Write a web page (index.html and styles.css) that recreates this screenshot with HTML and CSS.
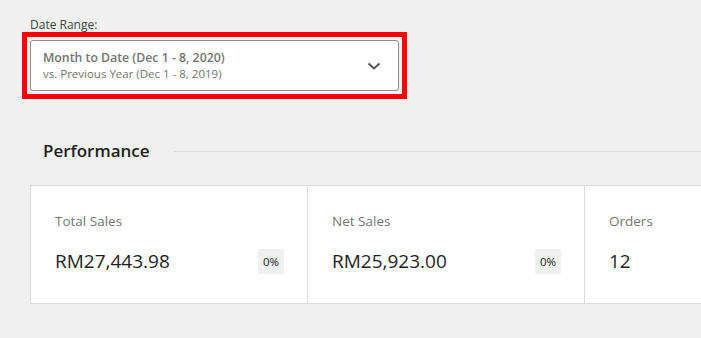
FILE: index.html
```html
<!DOCTYPE html>
<html lang="en">
<head>
    <meta charset="UTF-8">
    <meta name="viewport" content="width=device-width, initial-scale=1.0">
    <title>Analytics - Overview</title>
    <link rel="stylesheet" href="styles.css">
</head>
<body>
    <div class="page">
        <div class="date-range">
            <label class="field-label">Date Range:</label>
            <div class="highlight">
                <button class="range-select">
                    <span class="range-text">
                        <span class="range-main">Month to Date (Dec 1 - 8, 2020)</span>
                        <span class="range-compare">vs. Previous Year (Dec 1 - 8, 2019)</span>
                    </span>
                    <svg class="chevron" width="16" height="16" viewBox="0 0 16 16">
                        <path d="M2.5 5.5 L8 10.5 L13.5 5.5" fill="none" stroke="#555" stroke-width="2"/>
                    </svg>
                </button>
            </div>
        </div>

        <div class="section-head">
            <h2>Performance</h2>
            <span class="rule"></span>
        </div>

        <div class="cards">
            <div class="card">
                <div class="card-label">Total Sales</div>
                <div class="card-row">
                    <span class="card-value">RM27,443.98</span>
                    <span class="delta">0%</span>
                </div>
            </div>
            <div class="card">
                <div class="card-label">Net Sales</div>
                <div class="card-row">
                    <span class="card-value">RM25,923.00</span>
                    <span class="delta">0%</span>
                </div>
            </div>
            <div class="card">
                <div class="card-label">Orders</div>
                <div class="card-row">
                    <span class="card-value">12</span>
                    <span class="delta">0%</span>
                </div>
            </div>
        </div>
    </div>
</body>
</html>
```

FILE: styles.css
```css
body {
    font-family: "Open Sans", "Noto Sans", sans-serif;
    background-color: #f0f0f0;
    margin: 0;
    overflow: hidden;
}
.page {
    padding: 16px 0 0 30px;
}
.field-label {
    display: block;
    font-size: 12px;
    line-height: 18px;
    color: #444;
    margin-bottom: -2px;
}
.highlight {
    display: inline-block;
    margin-left: -8px;
    padding: 3px;
    border: 5px solid #ff0000;
}
.range-select {
    display: flex;
    align-items: center;
    justify-content: space-between;
    width: 369px;
    height: 51px;
    box-sizing: border-box;
    padding: 0 16px 0 12px;
    background: white;
    border: 1px solid #8c8f94;
    border-radius: 3px;
    font-family: inherit;
    text-align: left;
    cursor: pointer;
}
.range-text {
    display: flex;
    flex-direction: column;
}
.range-main {
    font-size: 12.3px;
    font-weight: 600;
    line-height: 17px;
    color: #757575;
}
.range-compare {
    font-size: 11.5px;
    line-height: 16px;
    color: #757575;
}
.section-head {
    display: flex;
    align-items: center;
    margin-top: 40px;
    padding-left: 13px;
}
.section-head h2 {
    margin: 0;
    font-size: 17px;
    font-weight: 600;
    line-height: 24px;
    color: #1e1e1e;
}
.rule {
    flex: 1;
    height: 1px;
    margin-left: 24px;
    background: #dcdcdc;
}
.cards {
    display: grid;
    grid-template-columns: repeat(3, 276px);
    gap: 1px;
    width: max-content;
    margin-top: 22px;
    background: #dcdcdc;
    border: 1px solid #dcdcdc;
}
.card {
    background: white;
    padding: 25px 23px 28px 24px;
}
.card-label {
    font-size: 13.5px;
    line-height: 20px;
    color: #757575;
}
.card-row {
    display: flex;
    align-items: center;
    justify-content: space-between;
    margin-top: 16px;
    height: 28px;
}
.card-value {
    font-size: 19px;
    line-height: 28px;
    color: #1e1e1e;
}
.delta {
    width: 26px;
    height: 25px;
    line-height: 25px;
    text-align: center;
    font-size: 11.5px;
    color: #1e1e1e;
    background: #f0f0f0;
    border-radius: 2px;
}
.card:last-child .delta {
    visibility: hidden;
}
```
